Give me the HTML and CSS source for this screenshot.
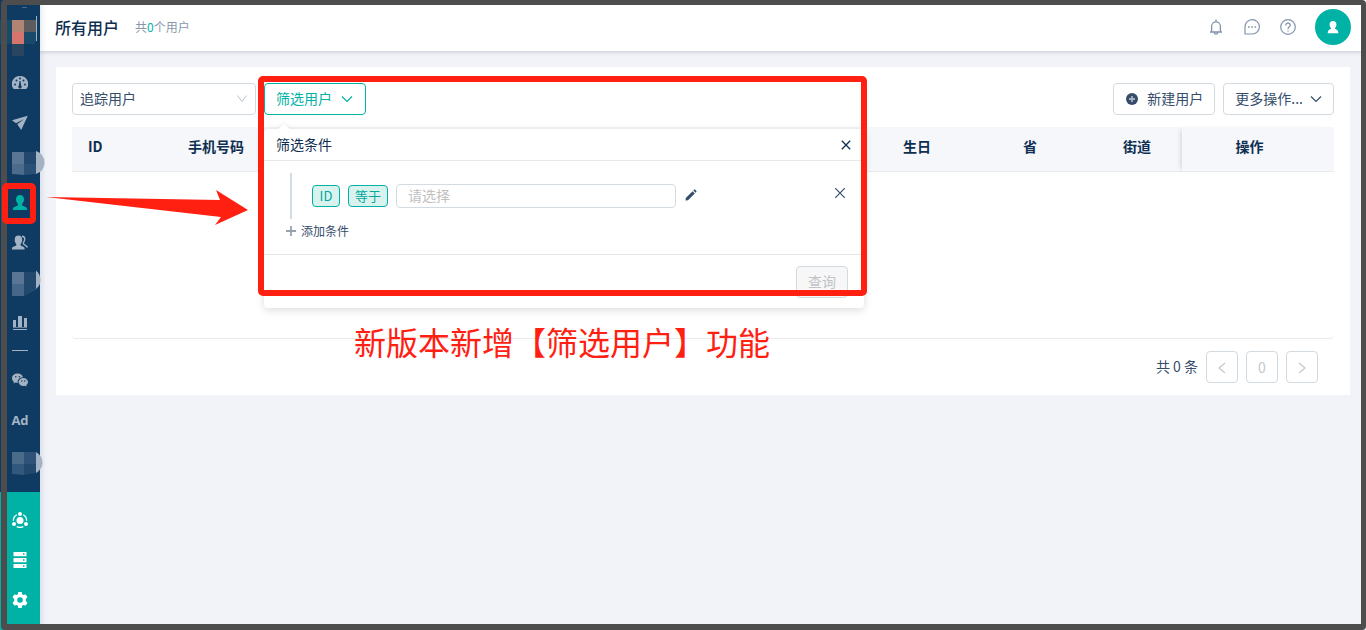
FILE: index.html
```html
<!DOCTYPE html>
<html lang="zh-CN">
<head>
<meta charset="utf-8">
<title>所有用户</title>
<link rel="stylesheet" href="styles.css">
</head>
<body>
<div class="app">
  <nav class="sidebar" aria-label="主导航">
    <a class="logo" href="#" aria-label="首页">
      <svg width="40" height="63" viewBox="0 0 40 63"><path fill="#1a4a6a" d="M0 20h36v22l-2 2H0z"/><path fill="#b08574" d="M12 20h12v12H12z"/><path fill="#5c5c5e" d="M24 20h12v12H24z"/><path fill="#d6756c" d="M12 32h12v12H12z"/><path fill="#2a4560" d="M12 44h12v12H12z"/><path d="M36.500 16v25" stroke="#a3b3c3"/><path d="M22 7.500h5" stroke="#4a6a88"/></svg>
    </a>
    <a class="nav-item" href="#" aria-label="概览"><svg width="16" height="16" viewBox="0 0 16 16"><path fill="currentColor" d="M8 1a8 8 0 0 0-7 12.200q.4.800 1.200.8h11.600q.8 0 1.200-.8A8 8 0 0 0 8 1z"/><g fill="#0f3a62"><circle cx="3" cy="9.500" r="1"/><circle cx="4.500" cy="5.500" r="1"/><circle cx="8" cy="3.500" r="1"/><circle cx="11.500" cy="5.500" r="1"/><circle cx="13" cy="9.500" r="1"/><path d="M7.500 6h1l.6 4.500a1.700 1.700 0 1 1-2.200 0z"/></g></svg></a>
    <a class="nav-item" href="#" aria-label="发送"><svg width="16" height="16" viewBox="0 0 16 16"><path fill="currentColor" d="M15.800.8 0 5.200l4 3L12 4 5.300 9.300 9.200 15z"/></svg></a>
    <a class="nav-item" href="#" aria-label="活动"><svg class="patch" width="48" height="40" viewBox="0 0 48 40"><path fill="#5a7694" d="M12 9h12v12H12z"/><path fill="#23486e" d="M24 9h12v12H24z"/><path fill="#4d6c8b" d="M12 21h12v11l-12-1z"/><path fill="#2a5076" d="M24 21h12v10l-12 1z"/><path fill="#a3b3c3" d="M36 8q8.500 3 8.500 11.500T36 31z"/></svg></a>
    <a class="nav-item active" href="#" aria-label="用户"><svg width="16" height="16" viewBox="0 0 16 16"><path fill="currentColor" d="M8 0c2.500 0 4 1.600 4 4.300 0 2.200-1 3.700-1.800 4.500v1.400c1 1.200 4.800 1.500 4.800 3.600V15H1v-1.200c0-2.100 3.800-2.400 4.800-3.600V8.800C5 8 4 6.500 4 4.300 4 1.600 5.500 0 8 0z"/></svg></a>
    <a class="nav-item" href="#" aria-label="用户群"><svg width="16" height="16" viewBox="0 0 16 16"><path fill="currentColor" d="M6.500.5C9 .5 10.200 2 10.200 4.700c0 2-.8 3.400-1.600 4.200v1.300c1 1.200 4 1.400 4 3.200V14.500H0v-1.100c0-1.800 3.400-2 4.300-3.200V8.900c-.8-.8-1.600-2.200-1.600-4.200C2.700 2 4 .5 6.500.5z"/><path fill="none" stroke="currentColor" stroke-width="1.400" d="M10 1.200c4 .5 3 4.500 1.200 6.900.1 2.100 3.400 1.800 4.200 4.400"/></svg></a>
    <a class="nav-item" href="#" aria-label="内容"><svg class="patch" width="48" height="40" viewBox="0 0 48 40"><path fill="#5a7694" d="M12 9h12v12H12z"/><path fill="#23486e" d="M24 9h12v12H24z"/><path fill="#46678a" d="M12 21h12v12H12z"/><path fill="#23486e" d="M24 21h12v6l-12 6z"/><path fill="#a3b3c3" d="M36 7.500q4.500 4 4.500 9.500T36 26z"/></svg></a>
    <a class="nav-item" href="#" aria-label="统计"><svg width="16" height="16" viewBox="0 0 16 16"><path fill="currentColor" d="M1 5h3v7H1zM6 1h4v11H6zM12 3h3v9h-3zM1 14h14v1H1z"/><path fill="currentColor" opacity=".6" d="M1 12h14v1H1z"/></svg></a>
    <hr class="nav-rule">
    <a class="nav-item" href="#" aria-label="微信"><svg width="16" height="16" viewBox="0 0 16 16"><path fill="currentColor" d="M5.600 1.500C2.500 1.500 0 3.500 0 6.200c0 1.500.8 2.800 2 3.700l-.5 1.700 2-1c.8.200 1.500.3 2.300.3-.8-3.300 2-5.800 5.300-5.700C10.500 3 8.200 1.500 5.600 1.500z"/><path fill="currentColor" d="M16 10c0-2.300-2.100-4-4.700-4s-4.700 1.700-4.700 4 2.100 4 4.700 4c.6 0 1.200-.1 1.700-.3l1.600 1-.4-1.500C15.300 12.500 16 11.300 16 10z"/><g fill="#0f3a62"><circle cx="3.800" cy="4.700" r=".8"/><circle cx="7.400" cy="4.700" r=".8"/><circle cx="9.800" cy="9" r=".7"/><circle cx="12.800" cy="9" r=".7"/></g></svg></a>
    <a class="nav-item nav-ad" href="#">Ad</a>
    <a class="nav-item" href="#" aria-label="渠道"><svg class="patch" width="48" height="40" viewBox="0 0 48 40"><path fill="#4b6b8b" d="M12 12h12v12H12z"/><path fill="#2e5278" d="M24 12h12v12H24z"/><path fill="#33587e" d="M12 24h12v11l-12-1z"/><path fill="#23486e" d="M24 24h12v9l-12 2z"/><path fill="#a3b3c3" d="M36 12q6.500 4 6.500 10.500T36 33z"/></svg></a>
    <div class="nav-bottom">
      <a class="nav-item" href="#" aria-label="集成"><svg width="16" height="16" viewBox="0 0 16 16"><g fill="currentColor"><circle cx="8" cy="8.500" r="3.500"/><circle cx="8" cy="2" r="2"/><circle cx="2" cy="12" r="2"/><circle cx="14" cy="12" r="2"/></g><path fill="none" stroke="currentColor" stroke-width="1.300" d="M4.800 2.800A6.600 6.600 0 0 0 1.400 8.800M11.200 2.800a6.600 6.600 0 0 1 3.400 6M4.700 14.600q3.300 1.600 6.600 0"/></svg></a>
      <a class="nav-item" href="#" aria-label="数据"><svg width="16" height="16" viewBox="0 0 16 16"><path fill="currentColor" d="M1.500 0h13v4.200h-13zM1.500 6h13v4.200h-13zM1.500 12h13v4h-13z"/><path fill="#00b2a5" d="M11 1.300h1.500v1.500H11zM11 7.300h1.500v1.500H11zM11 13.300h1.500v1.500H11z"/></svg></a>
      <a class="nav-item" href="#" aria-label="设置"><svg width="16" height="16" viewBox="0 0 16 16"><path fill="currentColor" fill-rule="evenodd" d="M6.300 0h3.400l.5 2.300 1.300.8 2.300-.7L15.500 5.300 13.800 7v2l1.700 1.700-1.700 2.900-2.300-.7-1.300.8L9.700 16H6.300l-.5-2.300-1.300-.8-2.300.7L.5 10.700 2.200 9V7L.5 5.300l1.700-2.900 2.300.7 1.300-.8zM8 5.200a2.800 2.800 0 1 0 0 5.600 2.800 2.800 0 0 0 0-5.600z"/></svg></a>
    </div>
  </nav>

  <div class="main">
    <header class="topbar">
      <h1 class="title">所有用户</h1>
      <span class="count">共<b>0</b>个用户</span>
      <div class="top-actions">
        <button class="icon-btn" aria-label="通知"><svg width="16" height="16" viewBox="0 0 16 16" fill="none" stroke="currentColor" stroke-width="1.300"><path d="M2 13h12M3.600 13V7.200a4.400 4.400 0 0 1 8.800 0V13M8 .5v2M6.300 13.500a1.700 1.700 0 0 0 3.400 0"/></svg></button>
        <button class="icon-btn" aria-label="消息"><svg width="16" height="16" viewBox="0 0 16 16" fill="none" stroke="currentColor" stroke-width="1.200"><path d="M1 15V8a7.200 7.200 0 1 1 7.200 7z"/><path d="M4 8h1.600M7.300 8h1.600M10.600 8h1.600" stroke-width="1.500"/></svg></button>
        <button class="icon-btn" aria-label="帮助"><svg width="16" height="16" viewBox="0 0 16 16" fill="none" stroke="currentColor" stroke-width="1.200"><circle cx="8" cy="8" r="7.300"/><path d="M5.700 6.400C5.700 3.300 10.400 3.500 10.300 6.300 10.200 7.900 8 7.800 8 9.900M8 11.200v1.300"/></svg></button>
        <button class="avatar" aria-label="账号"><svg width="14" height="14" viewBox="0 0 16 16"><path fill="#fff" d="M8 1c2.500 0 3.900 1.500 3.900 4 0 2-.8 3.300-1.600 4v1.100c1.200 1 3.700 1.500 3.700 3.800V15H2v-1.100c0-2.300 2.500-2.800 3.700-3.800V9c-.8-.7-1.600-2-1.600-4C4.100 2.500 5.500 1 8 1z"/></svg></button>
      </div>
    </header>

    <main class="content">
      <section class="card">
        <div class="toolbar">
          <div class="select-wrap">
            <select class="select" aria-label="用户类型"><option>追踪用户</option></select>
            <svg class="select-arrow" width="12" height="12" viewBox="0 0 12 12"><path d="M1.500 2.500 6 8.500l4.500-6" fill="none" stroke="currentColor"/></svg>
          </div>
          <div class="filter">
            <button class="btn btn-filter">筛选用户<svg width="12" height="12" viewBox="0 0 12 12"><path d="m1 3.500 5 5 5-5" fill="none" stroke="currentColor" stroke-width="1.200"/></svg></button>
            <div class="popover">
              <div class="pop-head">
                <span>筛选条件</span>
                <button class="close" aria-label="关闭"><svg width="10" height="10" viewBox="0 0 10 10"><path d="m.8.800 8.400 8.400m0-8.400L.8 9.200" stroke="currentColor" stroke-width="1.300"/></svg></button>
              </div>
              <div class="pop-body">
                <div class="condition">
                  <button class="tag">ID</button>
                  <button class="tag">等于</button>
                  <input class="value" type="text" placeholder="请选择" aria-label="条件值">
                  <button class="edit" aria-label="编辑"><svg width="12" height="12" viewBox="0 0 12 12"><path fill="currentColor" d="M.8 9 7.600 2.200l2.200 2.200L3 11.200.5 11.500zM8.300 1.500l.9-.9q.4-.4.800 0L11.400 2q.4.400 0 .8l-.9.900z"/></svg></button>
                  <button class="remove" aria-label="删除条件"><svg width="12" height="12" viewBox="0 0 12 12"><path d="m1.200 1.200 9.600 9.600m0-9.600-9.600 9.600" stroke="currentColor" stroke-width="1.200"/></svg></button>
                </div>
                <button class="add"><svg width="10" height="10" viewBox="0 0 10 10"><path d="M5 0v10M0 5h10" stroke="#95a2b1" stroke-width="1.800"/></svg>添加条件</button>
              </div>
              <div class="pop-foot"><button class="btn query" disabled>查询</button></div>
            </div>
          </div>
          <div class="tools">
            <button class="btn"><svg class="plus" width="12" height="12" viewBox="0 0 12 12"><circle cx="6" cy="6" r="6" fill="currentColor"/><path d="M6 3v6M3 6h6" stroke="#a6b1be" stroke-width="1.800"/></svg>新建用户</button>
            <button class="btn btn-more">更多操作...<svg width="12" height="12" viewBox="0 0 12 12"><path d="m1 3.500 5 5 5-5" fill="none" stroke="currentColor" stroke-width="1.200"/></svg></button>
          </div>
        </div>

        <table class="table">
          <colgroup><col class="c-id"><col class="c-phone"><col><col class="c-birth"><col class="c-prov"><col class="c-street"><col class="c-ops"></colgroup>
          <thead><tr><th>ID</th><th>手机号码</th><td></td><th>生日</th><th>省</th><th>街道</th><th class="ops">操作</th></tr></thead>
          <tbody><tr><td class="empty" colspan="7"></td></tr></tbody>
        </table>

        <div class="pager">
          <span class="total">共 0 条</span>
          <button class="page" disabled aria-label="上一页"><svg width="10" height="12" viewBox="0 0 10 12"><path d="M8 2 2 7l6 5" fill="none" stroke="currentColor" stroke-width="1.200"/></svg></button>
          <button class="page" disabled>0</button>
          <button class="page" disabled aria-label="下一页"><svg width="10" height="12" viewBox="0 0 10 12"><path d="m2 2 6 5-6 5" fill="none" stroke="currentColor" stroke-width="1.200"/></svg></button>
        </div>
      </section>
    </main>
  </div>
</div>

<div class="mark mark-nav"></div>
<svg class="mark-arrow" width="204" height="36" viewBox="0 0 204 36"><path fill="#ff2012" d="m1 7 174 3-4-10 32 20-33 15 6-8z"/></svg>
<div class="mark mark-panel"></div>
<p class="note">新版本新增【筛选用户】功能</p>
<div class="frame"></div>
</body>
</html>
```
FILE: styles.css
```css
* { box-sizing: border-box; }

body {
  margin: 0;
  background: #f1f3f8;
  color: #0f2f52;
  font: 14px/20px "Noto Sans CJK SC", "Noto Sans", sans-serif;
}

button, input, select { font: inherit; color: inherit; margin: 0; }
button { padding: 0; border: 0; background: none; cursor: pointer; }
button:disabled { cursor: default; }
svg { display: block; flex: none; }

.app { display: flex; min-height: 100vh; }

/* sidebar */
.sidebar {
  display: flex;
  flex-direction: column;
  flex: none;
  width: 40px;
  background: #0f3a62;
  box-shadow: 1px 0 6px rgba(15, 47, 82, .15);
  z-index: 2;
}
.logo { height: 63px; }
.nav-item {
  display: flex;
  align-items: center;
  justify-content: center;
  height: 40px;
  color: #a3b3c3;
  text-decoration: none;
}
.nav-item.active { color: #00b2a5; }
.nav-item .patch { margin-right: -8px; }
.nav-ad { font: bold 13px/20px "Open Sans", sans-serif; }
.nav-rule { width: 16px; margin: 7px auto 9px; border: 0; border-top: 1px solid #a3b3c3; }
.nav-bottom { margin-top: auto; padding: 8px 0 10px; background: #00b2a5; }
.nav-bottom .nav-item { color: #fff; }

/* header */
.main { flex: 1; min-width: 0; }
.topbar {
  display: flex;
  align-items: center;
  height: 51px;
  padding: 3px 15px 0;
  background: #fff;
  box-shadow: 0 1px 4px rgba(15, 30, 60, .2);
}
.title { margin: 0 16px 0 0; font-size: 16px; font-weight: 500; }
.count { color: #8797ad; font-size: 12px; }
.count b { color: #00b2a5; font-weight: 400; }
.top-actions { display: flex; align-items: center; gap: 20px; margin-left: auto; }
.icon-btn { color: #8193ab; }
.avatar {
  display: grid;
  place-items: center;
  width: 36px;
  height: 36px;
  border-radius: 50%;
  background: #00b2a5;
}
.icon-btn + .avatar { margin-left: -1px; }

/* card */
.content { padding: 16px; }
.card { padding: 16px 16px 12px; background: #fff; }
.toolbar { display: flex; gap: 8px; margin-bottom: 12px; }
.select-wrap { position: relative; width: 184px; color: #354d6b; }
.select {
  appearance: none;
  width: 100%;
  height: 32px;
  padding: 0 24px 2px 7px;
  border: 1px solid #d3dae0;
  border-radius: 4px;
  background: #fff;
}
.select-arrow { position: absolute; top: 10px; right: 8px; color: #bcc2c9; pointer-events: none; }
.btn {
  display: flex;
  align-items: center;
  height: 32px;
  padding: 0 11px 2px;
  border: 1px solid #d3dae0;
  border-radius: 4px;
  background: #fff;
  color: #354d6b;
}
.btn svg { margin: 2px 0 0 9px; }
.btn .plus { margin: 2px 9px 0 1px; }
.btn-filter { width: 102px; border-color: #00b2a5; color: #00b2a5; }
.btn-more svg { margin-left: 7px; }
.tools { display: flex; gap: 8px; margin-left: auto; }

/* filter panel */
.filter { position: relative; }
.popover {
  position: absolute;
  top: 46px;
  left: 0;
  width: 600px;
  border-radius: 4px;
  background: #fff;
  box-shadow: 0 2px 8px rgba(0, 0, 0, .15);
  z-index: 1;
}
.popover::before {
  content: "";
  position: absolute;
  top: -4px;
  left: 16px;
  width: 8px;
  height: 8px;
  background: #fff;
  box-shadow: -1px -1px 3px rgba(0, 0, 0, .06);
  transform: rotate(45deg);
}
.pop-head {
  display: flex;
  align-items: center;
  justify-content: space-between;
  height: 32px;
  padding: 0 13px 2px 12px;
  border-bottom: 1px solid #e8e8e8;
}
.pop-body { padding: 12px 16px 12px 26px; border-bottom: 1px solid #e8e8e8; }
.condition {
  display: flex;
  align-items: center;
  gap: 8px;
  height: 46px;
  padding-left: 20px;
  border-left: 2px solid #d3dae0;
}
.tag {
  height: 22px;
  padding: 0 6px;
  border: 1px solid #00b2a5;
  border-radius: 4px;
  background: #d9f2ee;
  color: #00a99d;
  font-size: 13px;
  line-height: 20px;
}
.tag:first-child { width: 28px; }
.value {
  width: 280px;
  height: 24px;
  padding: 0 11px 2px;
  border: 1px solid #d3dae0;
  border-radius: 4px;
}
.value::placeholder { color: #bfbfbf; opacity: 1; }
.edit, .remove, .close { color: #354d6b; }
.close { color: #0f2f52; padding-top: 2px; }
.edit { padding: 0 0 2px 1px; }
.remove { margin: 0 2px 0 auto; padding-bottom: 6px; }
.add {
  display: flex;
  align-items: center;
  gap: 5px;
  height: 22px;
  margin: 1px 0 0 -4px;
  color: #354d6b;
  font-size: 12px;
}
.pop-foot { display: flex; justify-content: flex-end; padding: 11px 16px 10px; }
.query { border-color: #d3dae0; background: #f7f7f7; color: #bfc3c9; }

/* table */
.table { width: 100%; border-spacing: 0; table-layout: fixed; border-radius: 0 0 4px 4px; border-bottom: 1px solid #e8eaec; }
.c-id { width: 100px; }
.c-phone { width: 180px; }
.c-birth { width: 120px; }
.c-prov { width: 100px; }
.c-street { width: 75px; }
.c-ops { width: 152px; }
.table thead th, .table thead td {
  height: 45px;
  padding: 0 16px 6px;
  border-bottom: 1px solid #e8eaec;
  background: #f5f7fb;
  text-align: left;
  font-weight: 700;
}
.table thead .ops { padding: 0 17px 6px 0; text-align: center; box-shadow: -4px 0 5px -3px rgba(0, 0, 0, .15); }
.table .empty { height: 166px; padding: 0; }

.pager { display: flex; align-items: center; justify-content: flex-end; gap: 8px; margin-top: 12px; padding-right: 16px; }
.total { padding-bottom: 3px; color: #354d6b; }
.page {
  display: grid;
  place-items: center;
  width: 32px;
  height: 32px;
  border: 1px solid #d3dae0;
  border-radius: 4px;
  color: #c3c7cd;
}

/* annotations drawn over the page */
.mark { position: absolute; border: 6px solid #ff2012; border-radius: 5px; z-index: 5; }
.mark-nav { left: 2px; top: 183px; width: 34px; height: 41px; }
.mark-panel { left: 258px; top: 76px; width: 609px; height: 220px; }
.mark-arrow { position: absolute; left: 45px; top: 190px; z-index: 5; }
.note {
  position: absolute;
  left: 354px;
  top: 320px;
  margin: 0;
  color: #ff2012;
  font-size: 32px;
  line-height: 42px;
  white-space: nowrap;
  z-index: 5;
}
.frame {
  position: absolute;
  inset: 0 0 0 1px;
  border: solid #4d4d4d;
  border-width: 5px 5px 6px 6px;
  border-radius: 4px;
  pointer-events: none;
  z-index: 4;
}
```
